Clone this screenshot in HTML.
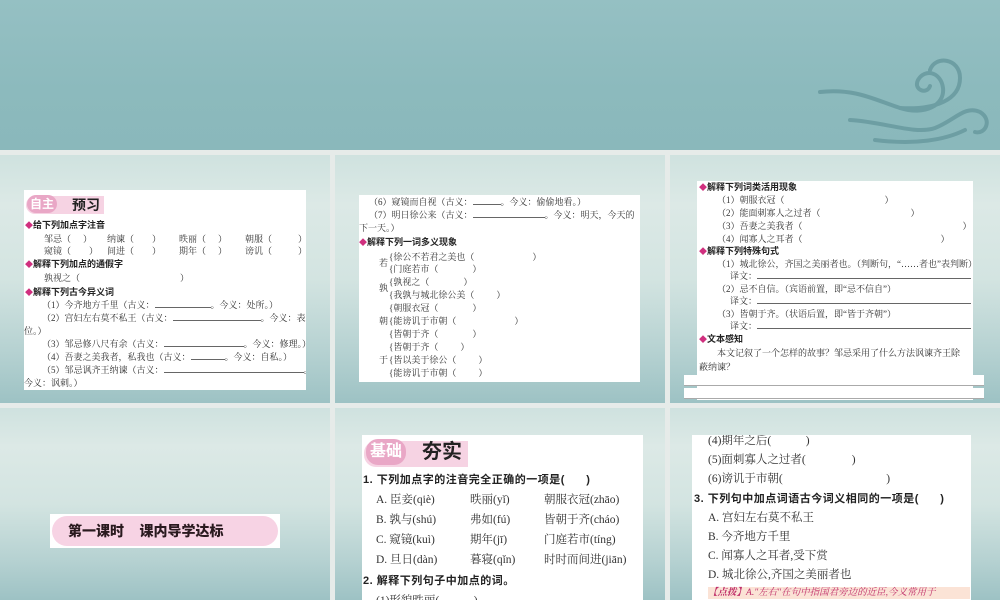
<!DOCTYPE html>
<html><head><meta charset="utf-8"><style>
*{margin:0;padding:0;box-sizing:border-box}
body{width:1000px;height:600px;overflow:hidden;background:#e6ebe9;position:relative;font-family:"Liberation Serif","Noto Serif CJK SC",serif;color:#333}
.top{position:absolute;left:0;top:0;width:1000px;height:150px;background:linear-gradient(180deg,#95c0c3 0%,#8cbabd 60%,#8ab8bb 100%)}
.pn{position:absolute;background:linear-gradient(180deg,#cfe2df 0%,#dce9e6 20%,#d3e4e1 50%,#b5d1d1 80%,#9dc2c4 100%);overflow:hidden}
.wb{position:absolute;background:#fff;overflow:hidden}
.l{position:absolute;white-space:nowrap;font-size:9px;line-height:12px}
.h{font-family:"Liberation Sans","Noto Sans CJK SC",sans-serif;font-weight:bold;color:#222}
.h:before{content:"◆";color:#d0307f;font-size:8px}
.u{display:inline-block;border-bottom:0.7px solid #666;height:8px;vertical-align:baseline}
.g{display:inline-block}
.b{font-size:11.5px;line-height:18px}
.s{font-family:"Liberation Sans","Noto Sans CJK SC",sans-serif;font-weight:bold;color:#222}
</style></head><body>
<div class="top">
<svg style="position:absolute;left:815px;top:50px" width="180" height="95" viewBox="0 0 180 95"><g fill="none" stroke="#6d9ea3" stroke-width="4" stroke-linecap="round"><path d="M5 42 C40 38 60 50 85 58 C110 66 130 55 128 38 C126 22 110 18 103 30 C98 40 112 45 115 36"/><path d="M85 58 C120 60 145 50 145 28 C145 8 120 5 115 20"/><path d="M35 70 C70 72 100 85 120 78 C140 70 150 55 165 62 C178 70 170 85 160 82"/><path d="M60 90 C100 95 130 90 150 80"/></g></svg>
</div>

<div class="pn" style="left:0;top:155px;width:330px;height:248px"></div>
<div class="pn" style="left:335px;top:155px;width:330px;height:248px"></div>
<div class="pn" style="left:670px;top:155px;width:330px;height:248px"></div>
<div class="pn" style="left:0;top:408px;width:330px;height:192px"></div>
<div class="pn" style="left:335px;top:408px;width:330px;height:192px"></div>
<div class="pn" style="left:670px;top:408px;width:330px;height:192px"></div>

<!-- P1 -->
<div class="wb" style="left:24px;top:190px;width:282px;height:200px">
<div style="position:absolute;left:2px;top:6px;width:78px;height:18px;background:#f6d3e3;border-radius:9px 0 0 9px"></div>
<div class="s" style="position:absolute;left:3px;top:5px;font-size:12px;color:#fff;background:#e9a7c6;border-radius:10px;padding:0 3px;line-height:18px">自主</div>
<div class="s" style="position:absolute;left:48px;top:5px;font-size:14px;line-height:20px">预习</div>
<div class="l h" style="left:1px;top:29px">给下列加点字注音</div>
<div class="l" style="left:20px;top:43px"><span class="g" style="width:63px">邹忌（<span class="g" style="width:12px"></span>）</span><span class="g" style="width:72px">纳谏（<span class="g" style="width:18px"></span>）</span><span class="g" style="width:66px">昳丽（<span class="g" style="width:12px"></span>）</span>朝服（<span class="g" style="width:26px"></span>）</div>
<div class="l" style="left:20px;top:55px"><span class="g" style="width:63px">窥镜（<span class="g" style="width:18px"></span>）</span><span class="g" style="width:72px">间进（<span class="g" style="width:18px"></span>）</span><span class="g" style="width:66px">期年（<span class="g" style="width:12px"></span>）</span>谤讥（<span class="g" style="width:26px"></span>）</div>
<div class="l h" style="left:1px;top:68px">解释下列加点的通假字</div>
<div class="l" style="left:20px;top:82px">孰视之（<span class="g" style="width:100px"></span>）</div>
<div class="l h" style="left:1px;top:96px">解释下列古今异义词</div>
<div class="l" style="left:18px;top:109px">（1）今齐地方千里（古义：<span class="u" style="width:56px"></span>。今义：处所。）</div>
<div class="l" style="left:18px;top:122px">（2）宫妇左右莫不私王（古义：<span class="u" style="width:88px"></span>。今义：表方</div>
<div class="l" style="left:0;top:135px">位。）</div>
<div class="l" style="left:18px;top:148px">（3）邹忌修八尺有余（古义：<span class="u" style="width:80px"></span>。今义：修理。）</div>
<div class="l" style="left:18px;top:161px">（4）吾妻之美我者，私我也（古义：<span class="u" style="width:34px"></span>。今义：自私。）</div>
<div class="l" style="left:18px;top:174px">（5）邹忌讽齐王纳谏（古义：<span class="u" style="width:140px"></span>。</div>
<div class="l" style="left:0;top:187px">今义：讽刺。）</div>
</div>

<!-- P2 -->
<div class="wb" style="left:359px;top:195px;width:281px;height:187px">
<div class="l" style="left:10px;top:1px">（6）窥镜而自视（古义：<span class="u" style="width:28px"></span>。今义：偷偷地看。）</div>
<div class="l" style="left:10px;top:14px">（7）明日徐公来（古义：<span class="u" style="width:72px"></span>。今义：明天，今天的</div>
<div class="l" style="left:0;top:27px">下一天。）</div>
<div class="l h" style="left:0;top:41px">解释下列一词多义现象</div>
<div class="l" style="left:20px;top:62px">若</div>
<div class="l" style="left:30px;top:56px">{徐公不若君之美也（<span class="g" style="width:58px"></span>）</div>
<div class="l" style="left:30px;top:68px">{门庭若市（<span class="g" style="width:34px"></span>）</div>
<div class="l" style="left:20px;top:87px">孰</div>
<div class="l" style="left:30px;top:81px">{孰视之（<span class="g" style="width:34px"></span>）</div>
<div class="l" style="left:30px;top:94px">{我孰与城北徐公美（<span class="g" style="width:22px"></span>）</div>
<div class="l" style="left:20px;top:120px">朝</div>
<div class="l" style="left:30px;top:107px">{朝服衣冠（<span class="g" style="width:34px"></span>）</div>
<div class="l" style="left:30px;top:120px">{能谤讥于市朝（<span class="g" style="width:58px"></span>）</div>
<div class="l" style="left:30px;top:133px">{皆朝于齐（<span class="g" style="width:34px"></span>）</div>
<div class="l" style="left:20px;top:159px">于</div>
<div class="l" style="left:30px;top:146px">{皆朝于齐（<span class="g" style="width:22px"></span>）</div>
<div class="l" style="left:30px;top:159px">{皆以美于徐公（<span class="g" style="width:22px"></span>）</div>
<div class="l" style="left:30px;top:172px">{能谤讥于市朝（<span class="g" style="width:22px"></span>）</div>
</div>

<!-- P3 -->
<div class="wb" style="left:697px;top:181px;width:276px;height:219px">
<div class="l h" style="left:2px;top:0">解释下列词类活用现象</div>
<div class="l" style="left:20px;top:13px">（1）朝服衣冠（<span class="g" style="width:100px"></span>）</div>
<div class="l" style="left:20px;top:26px">（2）能面刺寡人之过者（<span class="g" style="width:90px"></span>）</div>
<div class="l" style="left:20px;top:39px">（3）吾妻之美我者（<span class="g" style="width:160px"></span>）</div>
<div class="l" style="left:20px;top:52px">（4）闻寡人之耳者（<span class="g" style="width:138px"></span>）</div>
<div class="l h" style="left:2px;top:64px">解释下列特殊句式</div>
<div class="l" style="left:20px;top:77px">（1）城北徐公，齐国之美丽者也。（判断句，“……者也”表判断）</div>
<div class="l" style="left:33px;top:89px">译文：<span class="u" style="width:214px"></span></div>
<div class="l" style="left:20px;top:102px">（2）忌不自信。（宾语前置，即“忌不信自”）</div>
<div class="l" style="left:33px;top:114px">译文：<span class="u" style="width:214px"></span></div>
<div class="l" style="left:20px;top:127px">（3）皆朝于齐。（状语后置，即“皆于齐朝”）</div>
<div class="l" style="left:33px;top:139px">译文：<span class="u" style="width:214px"></span></div>
<div class="l h" style="left:2px;top:152px">文本感知</div>
<div class="l" style="left:20px;top:166px">本文记叙了一个怎样的故事？邹忌采用了什么方法讽谏齐王除</div>
<div class="l" style="left:2px;top:180px">蔽纳谏？</div>
</div>
<div style="position:absolute;left:684px;top:375px;width:300px;height:11px;background:#fff;border-bottom:1px solid #aaa"></div>
<div style="position:absolute;left:684px;top:388px;width:300px;height:11px;background:#fff;border-bottom:1px solid #aaa"></div>

<!-- P6 banner -->
<div style="position:absolute;left:50px;top:514px;width:230px;height:34px;background:#fff">
<div style="position:absolute;left:2px;top:2px;width:226px;height:30px;background:#f7d3e4;border-radius:15px"></div>
<div class="s" style="position:absolute;left:18px;top:5px;font-size:14px;line-height:24px;color:#2a1a1f;font-weight:900;white-space:nowrap">第一课时&nbsp;&nbsp;&nbsp;&nbsp;课内导学达标</div>
</div>

<!-- P4 -->
<div class="wb" style="left:362px;top:435px;width:281px;height:165px">
<div style="position:absolute;left:2px;top:6px;width:104px;height:26px;background:#f6d3e3;border-radius:12px 0 0 12px"></div>
<div class="s" style="position:absolute;left:4px;top:4px;font-size:16px;color:#fff;background:#e9a7c6;border-radius:12px;padding:0 4px;line-height:26px">基础</div>
<div class="s" style="position:absolute;left:60px;top:2px;font-size:20px;line-height:30px">夯实</div>
<div class="l b s" style="left:1px;top:36px;font-size:11px;letter-spacing:0.5px">1. 下列加点字的注音完全正确的一项是(&nbsp;&nbsp;&nbsp;&nbsp;&nbsp;&nbsp;)</div>
<div class="l b" style="left:14px;top:56px">A. 臣妾(qiè)</div><div class="l b" style="left:108px;top:56px">昳丽(yǐ)</div><div class="l b" style="left:182px;top:56px">朝服衣冠(zhāo)</div>
<div class="l b" style="left:14px;top:76px">B. 孰与(shú)</div><div class="l b" style="left:108px;top:76px">弗如(fú)</div><div class="l b" style="left:182px;top:76px">皆朝于齐(cháo)</div>
<div class="l b" style="left:14px;top:96px">C. 窥镜(kuì)</div><div class="l b" style="left:108px;top:96px">期年(jī)</div><div class="l b" style="left:182px;top:96px">门庭若市(tíng)</div>
<div class="l b" style="left:14px;top:116px">D. 旦日(dàn)</div><div class="l b" style="left:108px;top:116px">暮寝(qǐn)</div><div class="l b" style="left:182px;top:116px">时时而间进(jiān)</div>
<div class="l b s" style="left:1px;top:137px;font-size:11px;letter-spacing:0.5px">2. 解释下列句子中加点的词。</div>
<div class="l b" style="left:14px;top:157px">(1)形貌昳丽(&nbsp;&nbsp;&nbsp;&nbsp;&nbsp;&nbsp;&nbsp;&nbsp;&nbsp;&nbsp;&nbsp;&nbsp;)</div>
</div>

<!-- P5 -->
<div class="wb" style="left:692px;top:435px;width:279px;height:165px">
<div class="l b" style="left:16px;top:-3px">(4)期年之后(&nbsp;&nbsp;&nbsp;&nbsp;&nbsp;&nbsp;&nbsp;&nbsp;&nbsp;&nbsp;&nbsp;&nbsp;)</div>
<div class="l b" style="left:16px;top:16px">(5)面刺寡人之过者(&nbsp;&nbsp;&nbsp;&nbsp;&nbsp;&nbsp;&nbsp;&nbsp;&nbsp;&nbsp;&nbsp;&nbsp;&nbsp;&nbsp;&nbsp;&nbsp;)</div>
<div class="l b" style="left:16px;top:35px">(6)谤讥于市朝(&nbsp;&nbsp;&nbsp;&nbsp;&nbsp;&nbsp;&nbsp;&nbsp;&nbsp;&nbsp;&nbsp;&nbsp;&nbsp;&nbsp;&nbsp;&nbsp;&nbsp;&nbsp;&nbsp;&nbsp;&nbsp;&nbsp;&nbsp;&nbsp;&nbsp;&nbsp;&nbsp;&nbsp;&nbsp;&nbsp;&nbsp;&nbsp;&nbsp;&nbsp;&nbsp;&nbsp;)</div>
<div class="l b s" style="left:2px;top:55px;font-size:11px;letter-spacing:0.5px">3. 下列句中加点词语古今词义相同的一项是(&nbsp;&nbsp;&nbsp;&nbsp;&nbsp;&nbsp;)</div>
<div class="l b" style="left:16px;top:74px">A. 宫妇左右莫不私王</div>
<div class="l b" style="left:16px;top:93px">B. 今齐地方千里</div>
<div class="l b" style="left:16px;top:112px">C. 闻寡人之耳者,受下赏</div>
<div class="l b" style="left:16px;top:131px">D. 城北徐公,齐国之美丽者也</div>
<div class="l" style="left:16px;top:152px;width:262px;height:12px;background:#fbe3d6;font-size:9.5px;color:#c0306a;font-style:italic"><b>【点拨】</b>A."左右"在句中指国君旁边的近臣,今义常用于</div>
</div>
</body></html>
